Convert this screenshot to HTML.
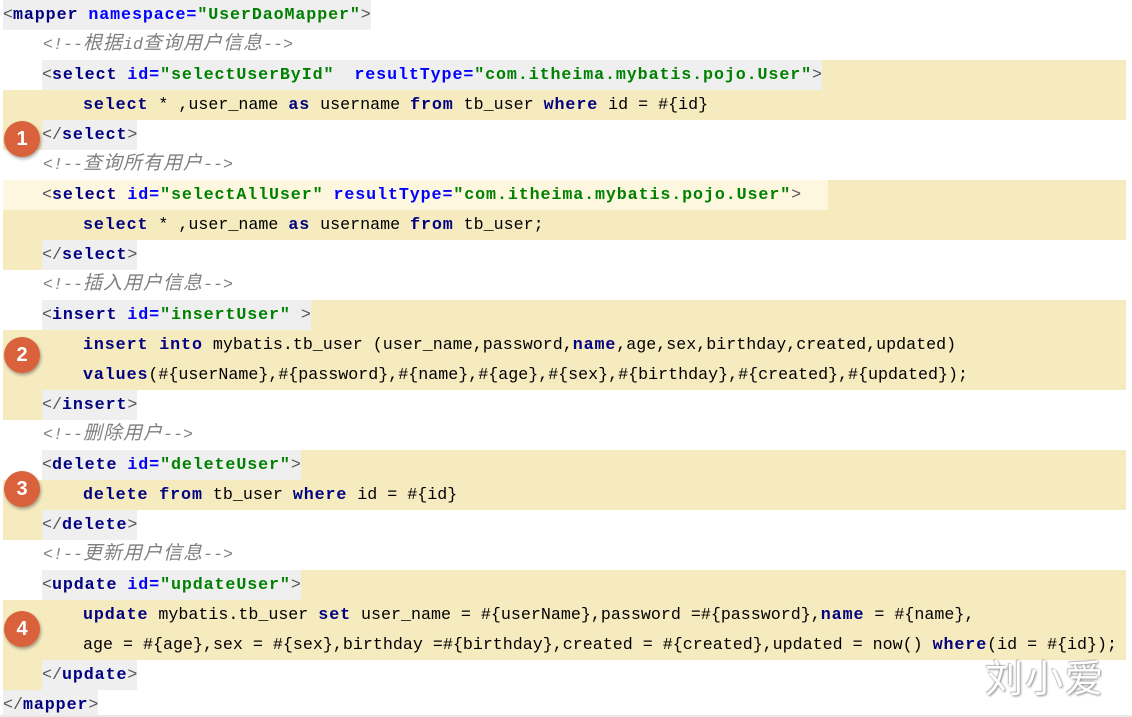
<!DOCTYPE html>
<html><head><meta charset="utf-8">
<style>
html,body{margin:0;padding:0;background:#fff;width:1132px;height:717px;overflow:hidden}
#w{position:relative;width:1132px;height:717px;font-family:"Liberation Mono","Noto Sans CJK SC",monospace;font-size:16.67px;color:#000}
.y{position:absolute;background:#f6eabf;height:30px}
.ls{position:absolute;left:3px;width:39px;background:#f6eabf;height:30px}
.t{position:absolute;height:30px;line-height:32px;white-space:pre}
.g{background:#efefef}
.tg,.at,.v,.k{font-weight:bold;letter-spacing:0.9px}
.tg{color:#000080}
.at{color:#0000ff}
.v{color:#008000}
.k{color:#000080}
.c{color:#808080;font-style:italic}
.cj{font-size:19px;letter-spacing:1px;line-height:20px}
.br{color:#555}
.n{position:absolute;width:36px;height:36px;border-radius:50%;background:#d9623d;color:#fff;font-family:"Liberation Sans",sans-serif;font-weight:bold;font-size:20px;text-align:center;line-height:36px;left:4px;box-shadow:1px 2px 3px rgba(0,0,0,.35)}
.wm{position:absolute;left:985px;top:648px;font-family:"Noto Sans CJK SC",sans-serif;font-size:38px;color:#fff;text-shadow:1px 1px 2px #888,-1px -1px 1px #bbb;letter-spacing:2px}
</style></head><body><div id="w">
<div class="y" style="top:60px;left:42px;width:1084px"></div>
<div class="ls" style="top:90px;height:60px"></div><div class="y" style="top:90px;left:42px;width:1084px"></div>
<div class="y" style="top:180px;left:3px;width:1123px;background:#fdf7df"></div>
<div class="y" style="top:180px;left:828px;width:298px"></div>
<div class="ls" style="top:210px;height:60px"></div><div class="y" style="top:210px;left:42px;width:1084px"></div>
<div class="y" style="top:300px;left:42px;width:1084px"></div>
<div class="ls" style="top:330px;height:90px"></div><div class="y" style="top:330px;left:42px;width:1084px;height:60px"></div>
<div class="y" style="top:450px;left:42px;width:1084px"></div>
<div class="ls" style="top:480px;height:60px"></div><div class="y" style="top:480px;left:42px;width:1084px"></div>
<div class="y" style="top:570px;left:42px;width:1084px"></div>
<div class="ls" style="top:600px;height:90px"></div><div class="y" style="top:600px;left:42px;width:1084px;height:60px"></div>

<div class="t g" style="top:0;left:3px"><span class="br">&lt;</span><span class="tg">mapper</span> <span class="at">namespace=</span><span class="v">"UserDaoMapper"</span><span class="br">&gt;</span></div>
<div class="t" style="top:30px;left:43px"><span class="c">&lt;!--<span class="cj">根据</span>id<span class="cj">查询用户信息</span>--&gt;</span></div>
<div class="t g" style="top:60px;left:42px"><span class="br">&lt;</span><span class="tg">select</span> <span class="at">id=</span><span class="v">"selectUserById"</span>  <span class="at">resultType=</span><span class="v">"com.itheima.mybatis.pojo.User"</span><span class="br">&gt;</span></div>
<div class="t" style="top:90px;left:83px"><span class="k">select</span> * ,user_name <span class="k">as</span> username <span class="k">from</span> tb_user <span class="k">where</span> id = #{id}</div>
<div class="t g" style="top:120px;left:42px"><span class="br">&lt;/</span><span class="tg">select</span><span class="br">&gt;</span></div>
<div class="t" style="top:150px;left:43px"><span class="c">&lt;!--<span class="cj">查询所有用户</span>--&gt;</span></div>
<div class="t" style="top:180px;left:42px"><span class="br">&lt;</span><span class="tg">select</span> <span class="at">id=</span><span class="v">"selectAllUser"</span> <span class="at">resultType=</span><span class="v">"com.itheima.mybatis.pojo.User"</span><span class="br">&gt;</span></div>
<div class="t" style="top:210px;left:83px"><span class="k">select</span> * ,user_name <span class="k">as</span> username <span class="k">from</span> tb_user;</div>
<div class="t g" style="top:240px;left:42px"><span class="br">&lt;/</span><span class="tg">select</span><span class="br">&gt;</span></div>
<div class="t" style="top:270px;left:43px"><span class="c">&lt;!--<span class="cj">插入用户信息</span>--&gt;</span></div>
<div class="t g" style="top:300px;left:42px"><span class="br">&lt;</span><span class="tg">insert</span> <span class="at">id=</span><span class="v">"insertUser"</span> <span class="br">&gt;</span></div>
<div class="t" style="top:330px;left:83px"><span class="k">insert into</span> mybatis.tb_user (user_name,password,<span class="k">name</span>,age,sex,birthday,created,updated)</div>
<div class="t" style="top:360px;left:83px"><span class="k">values</span>(#{userName},#{password},#{name},#{age},#{sex},#{birthday},#{created},#{updated});</div>
<div class="t g" style="top:390px;left:42px"><span class="br">&lt;/</span><span class="tg">insert</span><span class="br">&gt;</span></div>
<div class="t" style="top:420px;left:43px"><span class="c">&lt;!--<span class="cj">删除用户</span>--&gt;</span></div>
<div class="t g" style="top:450px;left:42px"><span class="br">&lt;</span><span class="tg">delete</span> <span class="at">id=</span><span class="v">"deleteUser"</span><span class="br">&gt;</span></div>
<div class="t" style="top:480px;left:83px"><span class="k">delete from</span> tb_user <span class="k">where</span> id = #{id}</div>
<div class="t g" style="top:510px;left:42px"><span class="br">&lt;/</span><span class="tg">delete</span><span class="br">&gt;</span></div>
<div class="t" style="top:540px;left:43px"><span class="c">&lt;!--<span class="cj">更新用户信息</span>--&gt;</span></div>
<div class="t g" style="top:570px;left:42px"><span class="br">&lt;</span><span class="tg">update</span> <span class="at">id=</span><span class="v">"updateUser"</span><span class="br">&gt;</span></div>
<div class="t" style="top:600px;left:83px"><span class="k">update</span> mybatis.tb_user <span class="k">set</span> user_name = #{userName},password =#{password},<span class="k">name</span> = #{name},</div>
<div class="t" style="top:630px;left:83px">age = #{age},sex = #{sex},birthday =#{birthday},created = #{created},updated = now() <span class="k">where</span>(id = #{id});</div>
<div class="t g" style="top:660px;left:42px"><span class="br">&lt;/</span><span class="tg">update</span><span class="br">&gt;</span></div>
<div class="t g" style="top:690px;left:3px"><span class="br">&lt;/</span><span class="tg">mapper</span><span class="br">&gt;</span></div>

<div class="n" style="top:121px">1</div>
<div class="n" style="top:337px">2</div>
<div class="n" style="top:471px">3</div>
<div class="n" style="top:611px">4</div>
<div class="wm">刘小爱</div>
<div style="position:absolute;left:0;top:715px;width:1132px;height:2px;background:#e8e8e8"></div>
</div></body></html>
